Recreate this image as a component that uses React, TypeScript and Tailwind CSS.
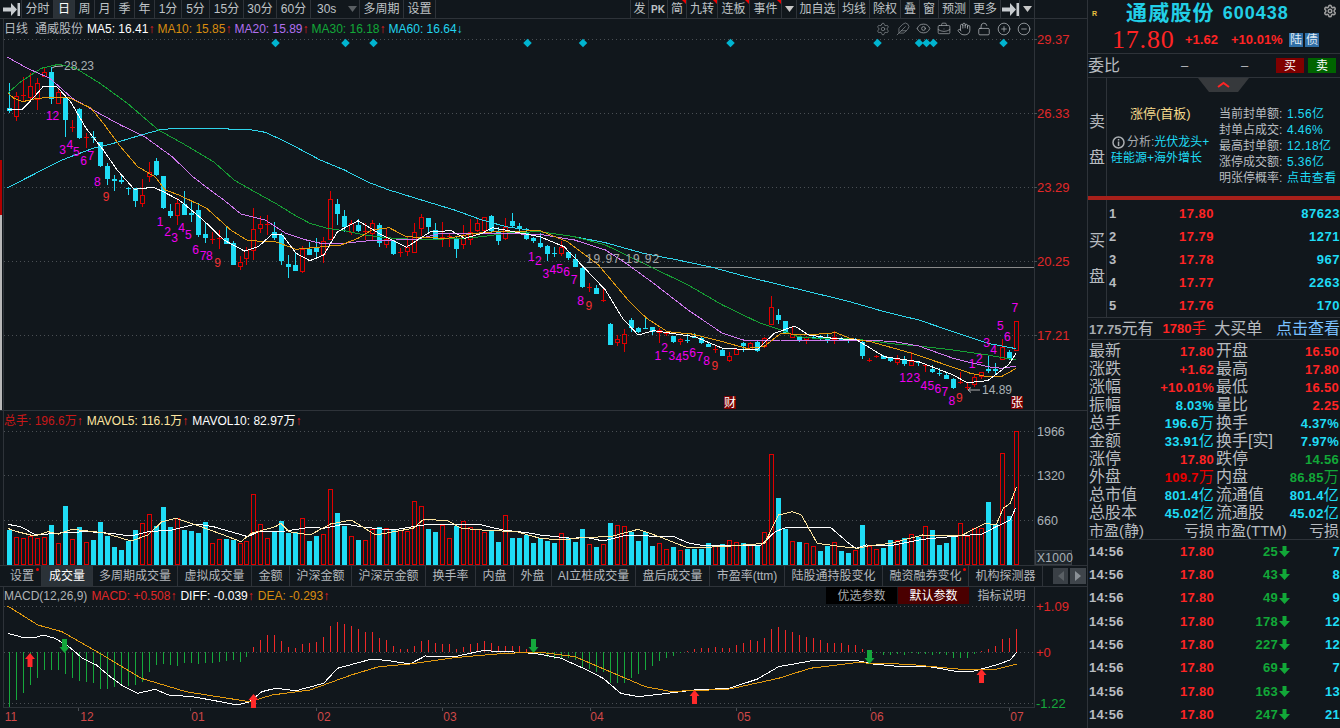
import React from "react";
import { Settings, Feather, Eye, BriefcaseBusiness, Hand, LockOpen, CirclePlus, CircleMinus } from "lucide-react";

type P = [number, number];
const CYAN = "#1fdcf5";
const X = (i: number) => Math.round(8.6 + 6.997 * i) + 0.5;
const z1 = (p: P[]): P[] => p.map(([x, y]) => [x / 2.904, y / 3]);
const z10 = (p: P[]): P[] => p.map(([x, y]) => [x / 2.904, 190 + y / 3]);
const z11 = (p: P[]): P[] => p.map(([x, y]) => [540 + x / 2.904, 190 + y / 3]);
const v6 = (p: P[]): P[] => p.map(([x, y]) => [x / 2.904, 400 + y / 3]);
const v7 = (p: P[]): P[] => p.map(([x, y]) => [540 + x / 2.85, 400 + y / 3]);
const m8 = (p: P[]): P[] => p.map(([x, y]) => [x / 2.904, 590 + y / 3]);
const m9 = (p: P[]): P[] => p.map(([x, y]) => [540 + x / 2.85, 590 + y / 3]);
const pts = (p: P[]) => p.map(([x, y]) => `${x.toFixed(1)},${y.toFixed(1)}`).join(" ");

// wickTop, bodyTop, bodyBottom, wickBottom, red(1)/cyan(0)  — units: 3 per pixel
const candlesA: number[][] = [
  [250,325,335,340,0],[275,287,347,362,1],[232,285,288,305,1],[220,257,290,300,1],[235,248,296,330,1],[205,215,227,228,1],[200,216,296,312,0],[265,275,308,312,1],
  [290,292,360,410,0],[360,380,382,395,1],[325,327,415,418,0],[398,412,414,445,1],[392,412,414,428,0],[425,427,500,500,0],[490,498,538,555,0],[525,538,543,572,0],
  [525,540,545,552,0],[560,565,569,585,0],[563,563,603,620,0],[537,585,608,620,1],[487,517,530,545,1],[475,484,525,527,0],[528,528,625,628,0],[612,633,648,655,0],
  [593,610,647,675,1],[573,613,645,645,0],[600,640,645,665,0],[610,630,705,710,0],[665,702,715,728,0],[695,717,719,732,1],[690,715,717,748,1],[680,715,732,732,0],
  [723,730,795,795,0],[768,787,800,810,1],[740,750,775,795,1],[625,688,750,780,1],[648,673,686,700,1],[645,673,676,705,1],[665,695,713,720,0],[700,705,783,795,0],
  [765,792,800,833,0],[755,796,813,813,0],[738,748,813,818,1],[725,747,765,765,0],[715,742,757,775,0],[710,722,762,788,1],[573,598,718,720,1],[598,612,642,675,0],
  [630,648,682,695,0],[660,668,696,705,1],[658,676,693,695,0],[670,692,694,720,1],[660,670,700,720,1],[670,676,730,740,0],[688,717,733,745,1],[720,723,762,765,0],
  [745,757,759,770,1],[710,742,755,767,1],[670,695,755,760,1],[642,650,682,707,1],[653,655,683,700,0],[670,690,718,720,0],[665,710,712,740,1],[700,707,709,740,1],
  [708,715,748,775,0],[675,705,733,747,1],[658,695,715,735,1],[655,670,690,695,1],[650,650,690,700,1],[645,648,693,695,0],[680,692,722,735,0],[655,682,715,720,1],
  [640,663,678,685,0],[670,678,688,695,0],[685,695,717,720,0],[710,715,725,730,0],
];
const candlesB: number[][] = [
  [130,160,172,175,0],[165,168,193,212,0],[172,190,192,200,0],[152,172,190,197,1],[182,185,203,210,0],[192,207,230,232,0],[228,234,291,295,0],[280,292,294,307,1],
  [285,293,310,312,0],[293,331,333,335,1],[398,402,465,465,0],[435,448,456,468,1],[418,433,460,485,1],[385,390,413,425,0],[410,414,426,430,0],[383,415,417,418,0],
  [412,412,428,435,0],[413,420,427,458,1],[422,430,432,438,1],[437,438,455,460,0],[445,448,455,465,1],[430,449,451,458,0],[430,442,444,445,0],[440,444,460,462,0],
  [458,461,470,472,0],[468,478,480,490,1],[478,480,497,498,0],[487,499,512,515,1],[473,476,490,490,1],[455,460,468,485,0],[455,458,475,480,1],[453,455,483,485,0],
  [442,445,470,475,1],[318,350,400,401,1],[357,375,390,402,0],[392,394,430,432,0],[412,432,441,445,1],[438,441,450,455,0],[437,441,448,462,1],[438,441,443,446,0],
  [435,441,443,450,0],[432,447,449,460,0],[422,440,447,462,1],[440,444,450,452,0],[445,451,455,458,0],[445,447,449,450,0],[450,455,498,507,0],[505,509,511,515,1],
  [495,498,500,503,1],[495,497,505,508,0],[502,504,513,515,0],[495,506,515,525,1],[498,507,522,527,0],[487,512,524,525,1],[515,516,519,528,0],[523,526,528,545,1],
  [525,537,546,550,0],[535,548,550,558,0],[550,554,565,568,0],[565,568,594,597,0],[545,577,579,582,1],[580,590,592,600,1],[555,560,582,590,1],[545,545,558,568,1],
  [497,537,543,548,0],[518,538,545,555,0],[448,470,506,508,1],[480,487,508,510,0],[392,392,480,482,1],
];
const candles = [
  ...candlesA.map((c) => [c[0] / 3, c[1] / 3, c[2] / 3, c[3] / 3, c[4]]),
  ...candlesB.map((c) => [190 + c[0] / 3, 190 + c[1] / 3, 190 + c[2] / 3, 190 + c[3] / 3, c[4]]),
];

const ma60 = [...z1([[22,563],[100,522],[180,480],[270,445],[330,430],[410,405],[470,388],[530,385],[720,388],[770,397],[830,425],[930,480],[1000,510],[1070,547],[1130,570]]),...z10([[1240,35],[1320,60],[1400,90],[1470,110],[1568,125]]),...z11([[100,140],[190,158],[300,190],[400,210],[500,232],[600,260],[700,285],[800,310],[900,335],[1000,365],[1100,390],[1200,425],[1300,460],[1383,476]])];
const ma30 = [...z1([[22,280],[60,245],[120,205],[170,193],[220,205],[290,250],[370,310],[460,390],[530,430],[620,485],[680,540],[730,570]]),...z10([[800,40],[860,78],[900,100],[950,115],[1000,122],[1060,135],[1120,143],[1200,148],[1270,148],[1340,145],[1400,140],[1480,128],[1568,125]]),...z11([[100,140],[190,165],[250,195],[330,235],[430,285],[530,345],[640,400],[700,420],[750,440],[800,445],[880,445],[960,452],[1030,462],[1100,468],[1200,480],[1300,495],[1383,510]])];
const ma20 = [...z1([[22,172],[80,205],[145,235],[210,295],[270,330],[350,375],[420,410],[500,470],[560,530],[610,570]]),...z10([[650,30],[700,72],[770,90],[830,130],[890,150],[940,162],[1000,160],[1070,152],[1150,150],[1210,148],[1280,130],[1380,130],[1568,133]]),...z11([[100,150],[190,180],[250,220],[330,280],[430,360],[530,430],[600,453],[700,450],[850,450],[950,450],[1030,455],[1100,468],[1200,505],[1300,530],[1340,535],[1383,528]])];
const ma10 = [...z1([[22,278],[40,295],[65,305],[100,297],[130,293],[200,293],[265,325],[300,370],[350,440],[400,500],[450,530],[480,570]]),...z10([[520,15],[600,55],[670,120],[720,152],[800,155],[860,178],[920,172],[990,165],[1040,145],[1080,120],[1130,113],[1180,140],[1240,143],[1300,145],[1380,130],[1440,125],[1568,122]]),...z11([[80,155],[170,225],[260,335],[310,385],[370,425],[440,432],[530,455],[600,475],[650,470],[700,430],[770,435],[860,428],[900,445],[960,455],[1080,490],[1180,525],[1250,550],[1300,560],[1340,560],[1383,535]])];
const ma5 = [...z1([[22,328],[65,328],[100,290],[125,260],[165,260],[205,305],[250,385],[300,450],[340,510],[390,568],[445,562]]),...z10([[470,3],[520,30],[590,90],[650,150],[710,183],[750,170],[790,133],[820,135],[860,190],[900,212],[940,195],[980,125],[1040,92],[1100,130],[1180,172],[1250,125],[1310,122],[1350,145],[1400,130],[1430,113],[1568,140]]),...z11([[70,170],[130,235],[190,300],[240,385],[285,435],[330,422],[450,440],[530,475],[630,480],[680,430],[740,408],[780,435],[850,445],[920,450],[1000,500],[1100,515],[1200,555],[1240,578],[1300,572],[1360,525],[1383,490]])];

// TD counter labels [x, y, text]
const seq = (p: P[], from: number) => p.map((q, i) => [q[0], q[1], String(i + from)] as [number, number, string]);
const td = [
  ...seq(z1([[143,347],[162,345],[182,447],[203,432],[222,453],[243,482],[264,465],[283,543],[308,590]]), 1),
  ...seq(z10([[465,95],[487,125],[507,143],[527,112],[547,132],[568,178],[590,197],[608,197],[632,218]]), 1),
  ...seq(z10([[1543,198],[1563,212]]), 1),
  ...seq(z11([[17,250],[37,238],[57,235],[77,245],[99,268],[118,330],[142,347]]), 3),
  ...seq(z11([[342,495],[362,472],[383,497],[403,502],[423,495],[443,488],[464,498],[484,510],[508,527]]), 1),
  ...seq(z11([[1053,563],[1073,563],[1094,563],[1115,585],[1135,587],[1155,595],[1176,603],[1196,632],[1218,622]]), 1),
  ...seq(z11([[1255,520],[1276,505],[1297,456],[1317,478],[1337,407],[1357,438],[1379,351]]), 1),
];

const diamonds = [275.5, 345.5, 373.5, 527.5, 583, 730.5, 877.5, 919, 926.5, 933.5, 1003.5];

// volume tops: negative = red (hollow)
const volTops = [390,-410,-415,-408,-415,-412,375,-430,318,-418,382,-425,420,366,408,441,450,423,390,-370,-343,378,321,381,-355,390,393,399,366,-430,-418,417,420,-430,-424,-283,-373,-415,393,363,399,396,-355,423,408,-402,-268,339,378,-409,420,-421,-388,381,-384,390,-390,-393,-304,-319,387,396,-375,-415,378,-363,-380,-388,-397,393,426,-345,414,414,405,429,
  415,423,429,-400,414,426,387,-433,441,-433,369,-376,-379,395,423,396,438,-430,-448,441,-451,447,447,447,429,-438,432,-421,-427,429,-435,435,-397,-163,294,387,-424,426,-430,-439,453,439,-427,453,459,-451,375,-439,-448,444,420,-421,414,-403,411,-379,390,435,429,405,-370,-408,-385,-385,306,372,-160,348,-94];

const volWhite = [...v6([[22,373],[60,380],[100,403],[140,402],[200,397],[260,395],[320,400],[380,408],[430,395],[500,390],[570,372],[620,380],[720,410],[750,395],[830,393],[900,382],[940,385],[1000,372],[1060,382],[1140,390],[1230,375],[1390,373],[1460,390],[1545,400]]),...v7([[0,405],[90,415],[130,412],[180,423],[240,407],[380,409],[420,428],[460,436],[540,438],[630,435],[670,395],[700,383],[830,384],[880,430],[900,445],[930,435],[1000,437],[1090,418],[1200,407],[1260,402],[1300,380],[1340,360],[1355,325]])];
const volCream = [...v6([[22,385],[50,395],[100,408],[140,395],[170,402],[210,388],[300,398],[380,423],[430,405],[470,365],[510,355],[570,375],[650,405],[700,425],[730,400],[800,380],[815,370],[840,395],[900,405],[960,372],[1020,360],[1060,385],[1090,405],[1200,385],[1230,358],[1300,362],[1340,385],[1400,390],[1500,395],[1545,408]]),...v7([[0,415],[60,420],[130,412],[200,410],[280,388],[340,410],[420,443],[520,440],[640,430],[680,345],[720,335],[745,345],[790,430],[860,440],[905,445],[940,437],[1000,430],[1090,405],[1200,407],[1270,370],[1300,375],[1320,325],[1340,310],[1358,260]])];

const hist = [352,330,310,285,265,240,240,240,252,265,272,275,280,297,298,290,285,288,285,275,245,225,222,225,228,220,220,222,220,218,215,212,210,215,202,
  170,150,135,135,153,170,175,162,160,155,140,108,97,103,108,118,125,125,145,150,168,177,178,168,153,150,158,162,162,178,170,162,160,153,158,168,168,168,168,178,184,195,
  200,208,205,205,210,235,238,245,245,278,280,278,263,252,240,228,213,204,198,190,
  183,178,174,174,170,173,174,165,158,150,153,143,117,111,120,125,135,141,145,150,158,159,160,164,165,177,184,
  190,194,196,193,194,190,192,192,195,192,195,205,204,203,192,182,177,168,147,144,118];

const diff = [...m8([[22,130],[65,142],[105,142],[125,135],[160,145],[200,170],[240,205],[280,225],[320,260],[360,290],[400,310],[450,298],[490,315],[560,320],[640,335],[690,345],[725,335],[760,305],[800,295],[860,302],[940,280],[980,235],[1080,207],[1130,212],[1190,222],[1235,198],[1320,200],[1400,182],[1480,185],[1545,190]]),...m9([[0,193],[60,205],[120,233],[180,265],[230,310],[280,320],[340,313],[440,300],[540,295],[620,267],[680,230],[770,213],[900,211],[950,222],[1030,230],[1110,230],[1180,243],[1230,245],[1300,225],[1340,210],[1358,187]])];
const dea = [...m8([[22,48],[110,105],[180,125],[290,190],[410,265],[540,305],[725,335],[790,315],[900,300],[1020,255],[1100,230],[1190,222],[1320,203],[1430,193],[1530,187]]),...m9([[0,187],[100,200],[200,245],[300,290],[370,304],[440,302],[540,297],[680,265],[770,235],[900,218],[1050,223],[1200,238],[1300,238],[1358,222]])];

const Arrow = ({ x, y, up, color }: { x: number; y: number; up: boolean; color: string }) => (
  <polygon
    points={up ? `${x},${y - 7} ${x + 5},${y - 1} ${x + 2.5},${y - 1} ${x + 2.5},${y + 7} ${x - 2.5},${y + 7} ${x - 2.5},${y - 1} ${x - 5},${y - 1}` : `${x},${y + 7} ${x + 5},${y + 1} ${x + 2.5},${y + 1} ${x + 2.5},${y - 7} ${x - 2.5},${y - 7} ${x - 2.5},${y + 1} ${x - 5},${y + 1}`}
    fill={color}
  />
);

function PriceChart() {
  const ticks: [number, string][] = [[39.5, "29.37"], [113.5, "26.33"], [187.5, "23.29"], [261.5, "20.25"], [335.5, "17.21"]];
  return (
    <svg className="block h-[372px] w-[1087px] overflow-visible" viewBox="0 38 1087 372" fontSize="12">
      <rect x="0" y="160" width="2" height="55" fill="#b00000" />
      <rect x="0" y="215" width="2" height="195" fill="#b8b8b8" />
      <line x1="3.5" y1="38" x2="3.5" y2="410" stroke="#2e3339" />
      <line x1="1034.5" y1="38" x2="1034.5" y2="410" stroke="#2e3339" />
      {ticks.map(([y, t]) => (
        <g key={t}>
          <line x1="4" y1={y} x2="1034" y2={y} stroke="#4a4f54" strokeDasharray="1 3" />
          <line x1="1034" y1={y} x2="1037" y2={y} stroke="#4a4f54" />
          <text x="1037" y={y + 4.5} fill="#e02828" fontSize="13">{t}</text>
        </g>
      ))}
      {diamonds.map((x) => (
        <rect key={x} x={x - 3} y={40} width="6" height="6" transform={`rotate(45 ${x} 43)`} fill="#00b4d0" />
      ))}
      <line x1="583" y1="267.5" x2="1034" y2="267.5" stroke="#8a8a8a" />
      {candles.map((c, i) => {
        const x = X(i);
        const col = c[4] ? "#e00000" : CYAN;
        const top = Math.round(c[1]);
        const h = Math.max(1, Math.round(c[2] - c[1]));
        return (
          <g key={i} shapeRendering="crispEdges">
            <line x1={x} y1={c[0]} x2={x} y2={c[3]} stroke={col} />
            {c[4] ? (
              h <= 1 ? <line x1={x - 2.5} y1={top + 0.5} x2={x + 2.5} y2={top + 0.5} stroke={col} /> :
              <rect x={x - 2} y={top + 0.5} width="4" height={h} fill="#11171c" stroke={col} />
            ) : (
              <rect x={x - 2.5} y={top} width="5" height={h} fill={col} />
            )}
          </g>
        );
      })}
      <g shapeRendering="crispEdges" fill="none">
        <polyline points={pts(ma60)} stroke="#2fd4ea" />
        <polyline points={pts(ma30)} stroke="#16a034" />
        <polyline points={pts(ma20)} stroke="#cf78ee" />
        <polyline points={pts(ma10)} stroke="#e39a10" />
        <polyline points={pts(ma5)} stroke="#ffffff" />
      </g>
      {td.map(([x, y, t], i) => (
        <text key={i} x={x} y={y + 4.5} textAnchor="middle" fontSize="12" fill={t === "9" ? "#f03030" : "#f000f0"}>{t}</text>
      ))}
      <polyline points="52,68 55,66.5 63,66" fill="none" stroke="#c0c0c0" />
      <text x="64" y="70" fill="#a8b0b4" fontSize="12">28.23</text>
      <text x="586" y="263" fill="#a8a8a8" fontSize="12" letterSpacing="0.9">19.97-19.92</text>
      <polyline points="968,390 980,390" fill="none" stroke="#b0b0b0" />
      <polyline points="971,387.5 968,390 971,392.5" fill="none" stroke="#b0b0b0" />
      <text x="982" y="394" fill="#a8b0b4" fontSize="12">14.89</text>
      <rect x="724" y="396" width="12" height="13" fill="#7a0000" />
      <text x="730" y="407" textAnchor="middle" fill="#ffffff" fontSize="12">财</text>
      <rect x="1011" y="396" width="12" height="13" fill="#7a0000" />
      <text x="1017" y="407" textAnchor="middle" fill="#ffffff" fontSize="12">张</text>
    </svg>
  );
}

function VolumeChart() {
  const ticks: [number, string][] = [[431.5, "1966"], [475.5, "1320"], [520.5, "660"]];
  return (
    <svg className="block h-[134px] w-[1087px] overflow-visible" viewBox="0 431 1087 134" fontSize="12">
      <line x1="3.5" y1="431" x2="3.5" y2="565" stroke="#2e3339" />
      <line x1="1034.5" y1="431" x2="1034.5" y2="565" stroke="#2e3339" />
      {ticks.map(([y, t]) => (
        <g key={t}>
          <line x1="4" y1={y} x2="1034" y2={y} stroke="#4a4f54" strokeDasharray="1 3" />
          <text x="1037" y={y + 4.5} fill="#aab2b8" fontSize="12.5">{t}</text>
        </g>
      ))}
      {volTops.map((v, i) => {
        const red = v < 0;
        const top = Math.round(400 + Math.abs(v) / 3);
        const x = X(i);
        return red ? (
          <rect key={i} x={x - 2} y={top + 0.5} width="4" height={565 - top - 1} fill="#11171c" stroke="#e00000" shapeRendering="crispEdges" />
        ) : (
          <rect key={i} x={x - 2.5} y={top} width="5" height={565 - top} fill={CYAN} shapeRendering="crispEdges" />
        );
      })}
      <g shapeRendering="crispEdges" fill="none">
        <polyline points={pts(volWhite)} stroke="#ffffff" />
        <polyline points={pts(volCream)} stroke="#ffe6a0" />
      </g>
      <rect x="1035.5" y="550.5" width="36" height="14" fill="#1e252b" stroke="#3a4046" />
      <text x="1037" y="561.5" fill="#aab2b8" fontSize="12" letterSpacing="0.3">X1000</text>
    </svg>
  );
}

function MacdChart() {
  const ticks: [number, string, string][] = [[606.5, "+1.09", "#e02828"], [652.5, "+0", "#e02828"], [703.5, "-1.22", "#16a83c"]];
  const mon: [number, string][] = [[11, "11"], [87, "12"], [198, "01"], [324, "02"], [450, "03"], [597, "04"], [744, "05"], [877, "06"], [1017, "07"]];
  const mt = [78, 190, 316, 442, 590, 736, 870, 1009];
  return (
    <svg className="block h-[124px] w-[1087px] overflow-visible" viewBox="0 604 1087 124" fontSize="12">
      <line x1="3.5" y1="604" x2="3.5" y2="708" stroke="#2e3339" />
      <line x1="1034.5" y1="604" x2="1034.5" y2="708" stroke="#2e3339" />
      <line x1="3" y1="707.5" x2="1035" y2="707.5" stroke="#2e3339" />
      {ticks.map(([y, t, c]) => (
        <g key={t}>
          <line x1="4" y1={y} x2="1034" y2={y} stroke="#4a4f54" strokeDasharray="1 3" />
          <text x="1036" y={y + 4.5} fill={c} fontSize="13">{t}</text>
        </g>
      ))}
      {hist.map((v, i) => {
        const y = 590 + v / 3;
        return <line key={i} x1={X(i)} y1={652} x2={X(i)} y2={y} stroke={v < 187 ? "#f02828" : "#16a83c"} shapeRendering="crispEdges" />;
      })}
      <g shapeRendering="crispEdges" fill="none">
        <polyline points={pts(diff)} stroke="#ffffff" />
        <polyline points={pts(dea)} stroke="#e39a10" />
      </g>
      <Arrow x={30} y={660} up color="#ff2a2a" />
      <Arrow x={253.5} y={701} up color="#ff2a2a" />
      <Arrow x={694.5} y={697} up color="#ff2a2a" />
      <Arrow x={981.5} y={676} up color="#ff2a2a" />
      <Arrow x={64.5} y={646} up={false} color="#14a83c" />
      <Arrow x={533.5} y={646} up={false} color="#14a83c" />
      <Arrow x={869.5} y={657} up={false} color="#14a83c" />
      {mt.map((x) => (
        <line key={x} x1={x + 0.5} y1="708" x2={x + 0.5} y2="711" stroke="#4a4f54" />
      ))}
      {mon.map(([x, t]) => (
        <text key={t} x={x} y="720.5" textAnchor="middle" fill="#d04848" fontSize="12">{t}</text>
      ))}
    </svg>
  );
}

const BarArrow = () => (
  <svg width="17" height="13" viewBox="0 0 17 13">
    <path d="M0 4.5h8V0l6 6.5-6 6.5V8.500H0z" fill="#c8ccd0" />
    <rect x="14.500" y="0" width="2.500" height="13" fill="#c8ccd0" />
  </svg>
);

const Tri = ({ color = "#c8c8c8" }: { color?: string }) => (
  <svg width="9" height="6" viewBox="0 0 9 6"><path d="M0 0h9L4.500 6z" fill={color} /></svg>
);

const Corner = () => <span className="absolute right-0 top-0 h-0 w-0 border-l-[4px] border-t-[4px] border-l-transparent border-t-[#f00000]" />;

function Toolbar() {
  const btn = "relative flex h-full items-center justify-center border-r border-[#2e3339] text-[12px] text-[#bfc3c6]";
  return (
    <div className="flex h-[19px] items-stretch border-b border-[#2e3339]">
      <div className={`${btn} w-[22px] justify-end pr-[1px]`}><BarArrow /></div>
      <div className={`${btn} w-[32px]`}>分时</div>
      <div className={`${btn} w-[21px] bg-[#2b3238] text-white`}>日</div>
      <div className={`${btn} w-[20px]`}>周</div>
      <div className={`${btn} w-[20px]`}>月</div>
      <div className={`${btn} w-[20px]`}>季</div>
      <div className={`${btn} w-[20px]`}>年</div>
      <div className={`${btn} w-[27px]`}>1分</div>
      <div className={`${btn} w-[28px]`}>5分</div>
      <div className={`${btn} w-[34px]`}>15分</div>
      <div className={`${btn} w-[33px]`}>30分</div>
      <div className={`${btn} w-[34px]`}>60分</div>
      <div className={`${btn} w-[49px] justify-start gap-[12px] pl-[6px]`}>30s<Tri color="#5a5f63" /></div>
      <div className={`${btn} w-[44px]`}>多周期</div>
      <div className={`${btn} w-[32px]`}>设置</div>
      <div className="w-[194px]" />
      <div className={`${btn} w-[19px] border-l`}>发</div>
      <div className={`${btn} w-[19px] text-[#8fb4c8]`}><span className="text-[10px] font-bold">PK</span></div>
      <div className={`${btn} w-[19px]`}>简<Corner /></div>
      <div className={`${btn} w-[31px]`}>九转<Corner /></div>
      <div className={`${btn} w-[32px]`}>连板<Corner /></div>
      <div className={`${btn} w-[32px]`}>事件<Corner /></div>
      <div className={`${btn} w-[15px]`}><Tri /></div>
      <div className={`${btn} w-[42px]`}>加自选</div>
      <div className={`${btn} w-[31px]`}>均线</div>
      <div className={`${btn} w-[31px]`}>除权</div>
      <div className={`${btn} w-[19px]`}>叠</div>
      <div className={`${btn} w-[19px]`}>窗</div>
      <div className={`${btn} w-[31px]`}>预测</div>
      <div className={`${btn} w-[31px]`}>更多</div>
      <div className={`${btn} w-[19px]`}><BarArrow /></div>
      <div className={`${btn} w-[15px]`}><Tri /></div>
    </div>
  );
}

const Up = () => <span className="text-[#e82020]">↑</span>;

function PriceLegend() {
  const iconCls = "text-[#8a8f93]";
  return (
    <div className="ml-[3px] flex h-[19px] w-[1032px] items-center gap-[3px] border-l border-r border-[#2e3339] text-[12px] text-[#b8bcc0]">
      <span>日线</span>
      <span className="ml-[4px]">通威股份</span>
      <span className="ml-[1px] text-white">MA5: 16.41<Up /></span>
      <span className="text-[#d88c10]">MA10: 15.85<Up /></span>
      <span className="text-[#b070f0]">MA20: 15.89<Up /></span>
      <span className="text-[#12a838]">MA30: 16.18<Up /></span>
      <span className="text-[#22d4ee]">MA60: 16.64↓</span>
      <div className="ml-auto mr-[3px] flex items-center gap-[6px]">
        <Settings size={14} strokeWidth={1.2} className={iconCls} />
        <Feather size={14} strokeWidth={1.2} className={iconCls} />
        <Eye size={15} strokeWidth={1.2} className="text-[#a8acb0]" />
        <BriefcaseBusiness size={14} strokeWidth={1.2} className="text-[#a8acb0]" />
        <Hand size={14} strokeWidth={1.2} className="text-[#c0c4c8]" />
        <LockOpen size={14} strokeWidth={1.2} className="text-[#c0c4c8]" />
        <CirclePlus size={14} strokeWidth={1.2} className="text-[#c0c4c8]" />
        <CircleMinus size={14} strokeWidth={1.2} className="text-[#c0c4c8]" />
      </div>
    </div>
  );
}

function VolumeLegend() {
  return (
    <div className="ml-[3px] flex h-[20px] w-[1032px] items-center gap-[4px] border-l border-r border-[#2e3339] text-[12px]">
      <span className="text-[#c81818]">总手: 196.6万<Up /></span>
      <span className="text-[#ffe6a0]">MAVOL5: 116.1万<Up /></span>
      <span className="text-white">MAVOL10: 82.97万<Up /></span>
    </div>
  );
}

const tabs: [string, string, boolean?, boolean?][] = [
  ["设置", "w-[39px]", false, true],
  ["成交量", "w-[51px]", true],
  ["多周期成交量", "w-[85px]"],
  ["虚拟成交量", "w-[74px]"],
  ["金额", "w-[38px]"],
  ["沪深金额", "w-[62px]"],
  ["沪深京金额", "w-[74px]"],
  ["换手率", "w-[50px]"],
  ["内盘", "w-[38px]"],
  ["外盘", "w-[38px]"],
  ["AI立桩成交量", "w-[84px]"],
  ["盘后成交量", "w-[74px]"],
  ["市盈率(ttm)", "w-[75px]"],
  ["陆股通持股变化", "w-[98px]"],
  ["融资融券变化", "w-[86px]", false, true],
  ["机构探测器", "w-[74px]"],
];

function Tabs() {
  return (
    <div className="flex h-[22px] items-stretch border-y border-[#2e3339] pl-[3px] text-[12px] text-[#b4b8bc]">
      {tabs.map(([t, w, active, dot]) => (
        <div key={t} className={`relative flex items-center justify-center whitespace-nowrap border-r border-[#2e3339] ${w} ${active ? "bg-[#2b3238] text-white" : ""}`}>
          {t}
          {dot ? <span className="absolute right-[2px] top-[2px] h-[3px] w-[3px] rounded-full bg-[#f00000]" /> : null}
        </div>
      ))}
      <div className="ml-[10px] flex items-center gap-[2px]">
        <div className="flex h-[16px] w-[15px] items-center justify-center bg-[#3a4046]"><span className="h-0 w-0 border-y-[5px] border-r-[6px] border-y-transparent border-r-[#5a6065]" /></div>
        <div className="flex h-[16px] w-[16px] items-center justify-center bg-[#3f454b]"><span className="h-0 w-0 border-y-[5px] border-l-[6px] border-y-transparent border-l-[#8a9096]" /></div>
      </div>
    </div>
  );
}

function MacdLegend() {
  return (
    <div className="ml-[3px] flex h-[17px] w-[1032px] items-center gap-[4px] border-l border-r border-[#2e3339] text-[12px]">
      <span className="text-[#b0b4b8]">MACD(12,26,9)</span>
      <span className="text-[#e02828]">MACD: +0.508<Up /></span>
      <span className="text-white">DIFF: -0.039<Up /></span>
      <span className="text-[#d88c10]">DEA: -0.293<Up /></span>
      <div className="ml-auto flex h-full">
        <span className="flex w-[71px] items-center justify-center bg-black text-[#a8acb0]">优选参数</span>
        <span className="ml-[1px] flex w-[71px] items-center justify-center bg-[#4a0000] text-white">默认参数</span>
        <span className="flex w-[65px] items-center justify-center text-[#b4b8bc]">指标说明</span>
      </div>
    </div>
  );
}

const sellStats: [string, string][] = [
  ["当前封单额:", "1.56亿"],
  ["封单占成交:", "4.46%"],
  ["最高封单额:", "12.18亿"],
  ["涨停成交额:", "5.36亿"],
  ["明张停概率:", "点击查看"],
];

const buys: [string, string, string][] = [
  ["1", "17.80", "87623"],
  ["2", "17.79", "1271"],
  ["3", "17.78", "967"],
  ["4", "17.77", "2263"],
  ["5", "17.76", "170"],
];

const R = "text-[#ff2424]";
const C = "text-[#1fdcf5]";
const G = "text-[#12a838]";
type Cell = [string, string];
const stats: [string, Cell, string, Cell][] = [
  ["最新", ["17.80", R], "开盘", ["16.50", R]],
  ["涨跌", ["+1.62", R], "最高", ["17.80", R]],
  ["涨幅", ["+10.01%", R], "最低", ["16.50", R]],
  ["振幅", ["8.03%", C], "量比", ["2.25", R]],
  ["总手", ["196.6万", C], "换手", ["4.37%", C]],
  ["金额", ["33.91亿", C], "换手[实]", ["7.97%", C]],
  ["涨停", ["17.80", R], "跌停", ["14.56", G]],
  ["外盘", ["109.7万", "text-[#e80000]"], "内盘", ["86.85万", G]],
  ["总市值", ["801.4亿", C], "流通值", ["801.4亿", C]],
  ["总股本", ["45.02亿", C], "流通股", ["45.02亿", C]],
];

const trades: [string, string][] = [["25", "7"], ["43", "8"], ["49", "9"], ["178", "12"], ["227", "12"], ["69", "7"], ["163", "13"], ["247", "21"]];

const Value = ({ v, cls }: { v: string; cls: string }) => {
  const last = v[v.length - 1];
  const cjk = last === "万" || last === "亿";
  return (
    <span className={`text-[13px] font-bold tracking-[0.3px] ${cls}`}>
      {cjk ? v.slice(0, -1) : v}
      {cjk ? <span className="text-[15px] font-normal">{last}</span> : null}
    </span>
  );
};

function RightPanel() {
  return (
    <div className="flex h-[728px] w-[253px] flex-col overflow-hidden border-l border-[#2e3339]">
      <div className="relative flex h-[27px] items-center">
        <span className="ml-[4px] w-[34px] text-[7px] font-bold leading-none text-[#e8c040]">R</span>
        <span className="font-['Liberation_Serif','Noto_Sans_CJK_SC',serif] text-[21px] font-bold tracking-[1.2px] text-[#22cfe6]">通威股份</span>
        <span className="ml-[8px] text-[18px] font-bold tracking-[1px] text-[#22cfe6]">600438</span>
        <Settings size={14} strokeWidth={2.6} className="absolute right-[3px] top-[4px] text-[#a0a0a0]" />
      </div>
      <div className="flex h-[27px] items-center border-b border-[#2e3339] pl-[24px]">
        <span className="w-[73px] font-['Liberation_Serif',serif] text-[26px] font-normal leading-none tracking-[0.8px] text-[#ff2424]">17.80</span>
        <span className="w-[46px] text-[13px] font-bold text-[#ff2424]">+1.62</span>
        <span className="w-[58px] text-[13px] font-bold text-[#ff2424]">+10.01%</span>
        <span className="flex h-[14px] w-[14px] items-center justify-center bg-[#2f6ea5] text-[12px] text-[#e0eaf2]">陆</span>
        <span className="ml-[2px] flex h-[14px] w-[14px] items-center justify-center bg-[#2f6ea5] text-[12px] text-[#e0eaf2]">债</span>
      </div>
      <div className="flex h-[24px] items-center border-b border-[#2e3339] text-[#b8bcc0]">
        <span className="w-[93px] text-[16px]">委比</span>
        <span className="w-[60px] text-[13px]">–</span>
        <span className="w-[35px] text-[13px]">–</span>
        <span className="flex h-[15px] w-[28px] items-center justify-center bg-[#800000] text-[12px] text-white">买</span>
        <span className="ml-[4px] flex h-[15px] w-[28px] items-center justify-center bg-[#006400] text-[12px] text-white">卖</span>
      </div>
      <div className="relative flex h-[118px]">
        <svg className="absolute left-[110px] top-0" width="51" height="14" viewBox="0 0 51 14">
          <path d="M0 0h51l-11 14H11z" fill="#36393c" />
          <path d="M20 9l5.500-4 5.500 4" fill="none" stroke="#ff2424" strokeWidth="2" />
        </svg>
        <div className="flex w-[19px] flex-col items-center gap-[20px] border-r border-[#2e3339] pt-[36px] text-[16px] leading-[16px] text-[#b8bcc0]">
          <span>卖</span>
          <span>盘</span>
        </div>
        <div className="w-[112px] pl-[4px] pt-[28px] text-[12px] leading-[16px]">
          <div className="pl-[19px] text-[13px] text-[#f5d98b]">涨停(首板)</div>
          <div className="mt-[12px] flex items-center text-[#a8acb0]">
            <svg className="ml-[1px] mr-[2px]" width="13" height="13" viewBox="0 0 13 13">
              <circle cx="6.500" cy="6.500" r="5.500" fill="none" stroke="#a8acb0" strokeWidth="1.500" />
              <rect x="5.800" y="3" width="1.500" height="1.500" fill="#a8acb0" />
              <rect x="5.800" y="5.500" width="1.500" height="4.500" fill="#a8acb0" />
            </svg>
            分析:<span className={C}>光伏龙头+</span>
          </div>
          <div className={`whitespace-nowrap ${C}`}>硅能源+海外增长</div>
        </div>
        <div className="flex-1 pt-[28px] text-[12px] leading-[16px] text-[#b8bcc0]">
          {sellStats.map(([a, b]) => (
            <div key={a} className="flex whitespace-nowrap">
              <span className="w-[68px]">{a}</span>
              <span className={`tracking-[0.4px] ${C}`}>{b}</span>
            </div>
          ))}
        </div>
      </div>
      <div className="h-[4px] bg-[#a8201a]" />
      <div className="flex h-[118px] border-b border-[#2e3339]">
        <div className="flex w-[19px] flex-col items-center justify-center gap-[20px] border-r border-[#2e3339] text-[16px] leading-[16px] text-[#b8bcc0]">
          <span>买</span>
          <span>盘</span>
        </div>
        <div className="flex flex-1 flex-col justify-around pt-[2px]">
          {buys.map(([n, p, v]) => (
            <div key={n} className="flex items-center text-[13px] font-bold tracking-[0.5px]">
              <span className="w-[25px] pl-[2px] text-[#b8bcc0]">{n}</span>
              <span className={`w-[82px] text-right ${R}`}>{p}</span>
              <span className={`flex-1 text-right ${C}`}>{v}</span>
            </div>
          ))}
        </div>
      </div>
      <div className="flex h-[22px] items-center border-b border-[#2e3339] pl-[1px] text-[16px] text-[#b8bcc0]">
        <span className="w-[74px] whitespace-nowrap"><span className="text-[13px] font-bold text-[#a8acb0]">17.75</span>元有</span>
        <span className={`w-[52px] whitespace-nowrap text-[13px] font-bold ${R}`}>1780<span className="text-[15px] font-normal">手</span></span>
        <span className="w-[62px]">大买单</span>
        <span className="whitespace-nowrap text-[#7ac0ff]">点击查看</span>
      </div>
      <div className="flex flex-col pt-[2px]">
        {stats.map(([l1, v1, l2, v2]) => (
          <div key={l1 + l2} className="flex h-[18px] items-center pl-[1px] text-[16px] leading-[18px] text-[#b8bcc0]">
            <span className="w-[50px] whitespace-nowrap">{l1}</span>
            <span className="w-[75px] text-right"><Value v={v1[0]} cls={v1[1]} /></span>
            <span className="w-[52px] whitespace-nowrap pl-[2px]">{l2}</span>
            <span className="w-[73px] text-right"><Value v={v2[0]} cls={v2[1]} /></span>
          </div>
        ))}
        <div className="flex h-[17px] items-center pl-[1px] text-[15px] leading-[17px] text-[#b8bcc0]">
          <span className="w-[54px] whitespace-nowrap">市盈(静)</span>
          <span className="w-[71px] text-right">亏损</span>
          <span className="w-[72px] whitespace-nowrap pl-[2px]">市盈(TTM)</span>
          <span className="w-[53px] text-right">亏损</span>
        </div>
      </div>
      <div className="flex flex-1 flex-col border-t border-[#2e3339]">
        {trades.map(([v, n], i) => (
          <div key={i} className="flex h-[23.3px] items-center text-[13px] font-bold tracking-[0.3px]">
            <span className="w-[53px] pl-[1px] text-[#b8bcc0]">14:56</span>
            <span className={`w-[73px] text-right ${R}`}>17.80</span>
            <span className={`w-[64px] text-right ${G}`}>{v}</span>
            <svg className="ml-[1px]" width="11" height="11" viewBox="0 0 11 11"><path d="M3.500 0h4v5H11L5.500 11 0 5h3.500z" fill="#12a838" /></svg>
            <span className={`flex-1 text-right ${C}`}>{n}</span>
          </div>
        ))}
      </div>
    </div>
  );
}

export default function App() {
  return (
    <div className="flex h-[728px] w-[1340px] overflow-hidden bg-[#11171c] font-['Liberation_Sans','Noto_Sans_CJK_SC',sans-serif]">
      <div className="flex h-[728px] w-[1087px] flex-col">
        <Toolbar />
        <PriceLegend />
        <PriceChart />
        <div className="h-px bg-[#2e3339]" />
        <VolumeLegend />
        <VolumeChart />
        <Tabs />
        <MacdLegend />
        <MacdChart />
      </div>
      <RightPanel />
    </div>
  );
}
